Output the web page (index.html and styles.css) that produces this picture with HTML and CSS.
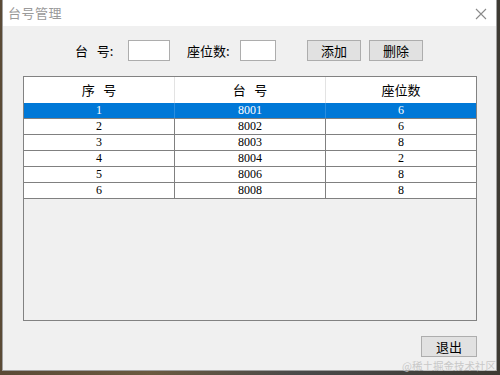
FILE: index.html
```html
<!DOCTYPE html>
<html lang="zh">
<head>
<meta charset="utf-8">
<title>台号管理</title>
<link rel="stylesheet" href="styles.css">
</head>
<body>
<div class="desk">
  <div class="win">
    <div class="titlebar">
      <span class="title">台号管理</span>
      <svg class="close" width="12" height="12" viewBox="0 0 12 12"><path d="M1 1L11 11M11 1L1 11" stroke="#8a8a8a" stroke-width="1.1" fill="none"/></svg>
    </div>
    <div class="toolbar">
      <span class="lbl lbl1">台&nbsp;&nbsp;&nbsp;号:</span>
      <span class="input in1"></span>
      <span class="lbl lbl2">座位数:</span>
      <span class="input in2"></span>
      <button class="btn btn-add">添加</button>
      <button class="btn btn-del">删除</button>
    </div>
    <div class="grid">
      <div class="row head">
        <div class="cell">序&nbsp;&nbsp;&nbsp;号</div>
        <div class="cell">台&nbsp;&nbsp;&nbsp;号</div>
        <div class="cell">座位数</div>
      </div>
      <div class="row sel"><div class="cell">1</div><div class="cell">8001</div><div class="cell">6</div></div>
      <div class="row"><div class="cell">2</div><div class="cell">8002</div><div class="cell">6</div></div>
      <div class="row"><div class="cell">3</div><div class="cell">8003</div><div class="cell">8</div></div>
      <div class="row"><div class="cell">4</div><div class="cell">8004</div><div class="cell">2</div></div>
      <div class="row"><div class="cell">5</div><div class="cell">8006</div><div class="cell">8</div></div>
      <div class="row"><div class="cell">6</div><div class="cell">8008</div><div class="cell">8</div></div>
    </div>
    <div class="footer">
      <button class="btn btn-exit">退出</button>
    </div>
  </div>
  <div class="watermark">@稀土掘金技术社区</div>
</div>
</body>
</html>
```
FILE: styles.css
```css
html, body {
  margin: 0;
  padding: 0;
}
body {
  width: 500px;
  height: 375px;
  overflow: hidden;
  font-family: "Noto Sans CJK SC", "Liberation Sans", sans-serif;
}
.desk {
  position: relative;
  width: 500px;
  height: 375px;
  background: linear-gradient(90deg, #5a4a36 0%, #6b5a40 30%, #4a4a4a 60%, #3d3a33 100%);
  overflow: hidden;
}
.win {
  margin-left: 2px;
  width: 495px;
  height: 371px;
  box-sizing: border-box;
  border: 1px solid #a0a0a0;
  border-top: none;
  background: #f0f0f0;
  display: flex;
  flex-direction: column;
}
.titlebar {
  height: 26px;
  background: #ffffff;
  display: flex;
  align-items: center;
  justify-content: space-between;
  padding: 0 9px 0 5px;
  flex-shrink: 0;
}
.title {
  font-size: 13px;
  color: #9a9a9a;
  letter-spacing: 0.5px;
  margin-top: -2px;
}
.close {
  display: block;
  margin-top: 2px;
}
.toolbar {
  display: flex;
  align-items: center;
  margin-top: 14px;
  height: 21px;
  font-size: 13px;
  color: #000;
}
.lbl1 {
  margin-left: 72px;
  width: 53px;
  white-space: nowrap;
}
.lbl2 {
  margin-left: 17px;
  width: 53px;
  white-space: nowrap;
}
.input {
  display: block;
  height: 21px;
  box-sizing: border-box;
  border: 1px solid #adadad;
  background: #ffffff;
}
.in1 { width: 42px; }
.in2 { width: 36px; }
.btn {
  height: 21px;
  box-sizing: border-box;
  border: 1px solid #adadad;
  background: #e1e1e1;
  font-family: "Noto Sans CJK SC", sans-serif;
  font-size: 13px;
  color: #000;
  padding: 0;
  line-height: 18px;
}
.btn-add { width: 54px; margin-left: 31px; }
.btn-del { width: 54px; margin-left: 8px; }
.grid {
  margin: 15px 0 0 20px;
  width: 454px;
  height: 245px;
  box-sizing: border-box;
  border: 1px solid #828282;
  background: #f0f0f0;
}
.row {
  display: grid;
  grid-template-columns: 151px 151px 150px;
  height: 16px;
  background: #ffffff;
  border-bottom: 1px solid #808080;
  box-sizing: border-box;
  font-family: "Liberation Serif", "Noto Sans CJK SC", serif;
  font-size: 12px;
  line-height: 15px;
}
.row .cell {
  text-align: center;
  border-right: 1px solid #808080;
}
.row .cell:last-child {
  border-right: none;
}
.row.head {
  height: 26px;
  line-height: 25px;
  border-bottom: none;
  font-family: "Noto Sans CJK SC", sans-serif;
  font-size: 13px;
}
.row.head .cell {
  border-right: 1px solid #e3e3e3;
}
.row.head .cell:last-child {
  border-right: none;
}
.row.sel {
  background: #0078d7;
  color: #ffffff;
}
.row.sel .cell {
  border-right-color: #2a8ee0;
}
.footer {
  display: flex;
  justify-content: flex-end;
  padding-right: 19px;
  margin-top: 15px;
}
.btn-exit {
  width: 56px;
}
.watermark {
  position: absolute;
  left: 402px;
  top: 359px;
  font-size: 10.5px;
  line-height: 14px;
  color: #c8c8c8;
  white-space: nowrap;
}
```
